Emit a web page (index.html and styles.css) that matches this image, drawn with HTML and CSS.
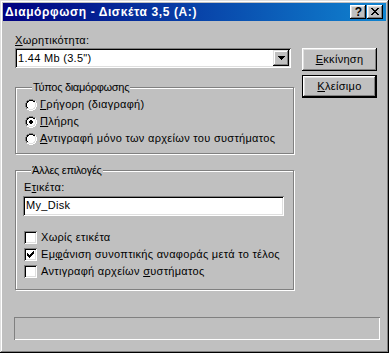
FILE: index.html
```html
<!DOCTYPE html>
<html lang="el">
<head>
<meta charset="utf-8">
<link rel="stylesheet" href="styles.css">
</head>
<body>
<div class="window">
  <div class="titlebar">
    <span class="title">Διαμόρφωση - Δισκέτα 3,5 (A:)</span>
    <div class="cap-btns">
      <span class="cap-btn help">?</span>
      <span class="cap-btn close"><svg width="8" height="7" viewBox="0 0 8 7" shape-rendering="crispEdges"><path d="M0 0h2v1h-2zM6 0h2v1h-2zM1 1h2v1h-2zM5 1h2v1h-2zM2 2h4v1h-4zM3 3h2v1h-2zM2 4h4v1h-4zM1 5h2v1h-2zM5 5h2v1h-2zM0 6h2v1h-2zM6 6h2v1h-2z" fill="#000"/></svg></span>
    </div>
  </div>
  <div class="content">
    <div class="main">
      <div class="left">
        <div class="lbl"><u>Χ</u>ωρητικότητα:</div>
        <div class="combo">
          <span class="combo-text">1.44 Mb (3.5")</span>
          <span class="combo-btn"><svg width="7" height="4" viewBox="0 0 7 4" shape-rendering="crispEdges"><path d="M0 0h7v1h-7zM1 1h5v1h-5zM2 2h3v1h-3zM3 3h1v1h-1z" fill="#000"/></svg></span>
        </div>
        <fieldset class="group g1">
          <legend>Τύπος διαμόρφωσης</legend>
          <div class="opt">
            <svg class="radio" width="12" height="12" viewBox="0 0 12 12" shape-rendering="crispEdges"><path d="M4 0h4v1h-4zM2 1h2v1h-2zM8 1h2v1h-2zM1 2h1v2h-1zM0 4h1v4h-1zM1 8h1v2h-1z" fill="#808080"/><path d="M10 2h1v2h-1zM11 4h1v4h-1zM10 8h1v2h-1zM2 10h2v1h-2zM8 10h2v1h-2zM4 11h4v1h-4z" fill="#fff"/><path d="M4 1h4v1h-4zM2 2h2v1h-2zM8 2h2v1h-2zM2 3h1v1h-1zM1 4h1v4h-1zM2 8h1v1h-1z" fill="#000"/><path d="M9 3h1v1h-1zM10 4h1v4h-1zM9 8h1v1h-1zM2 9h2v1h-2zM8 9h2v1h-2zM4 10h4v1h-4z" fill="#dfdfdf"/><path d="M4 2h4v1h-4zM3 3h6v1h-6zM2 4h8v4h-8zM3 8h6v1h-6zM4 9h4v1h-4z" fill="#fff"/></svg>
            <span><u>Γ</u>ρήγορη (διαγραφή)</span>
          </div>
          <div class="opt">
            <svg class="radio" width="12" height="12" viewBox="0 0 12 12" shape-rendering="crispEdges"><path d="M4 0h4v1h-4zM2 1h2v1h-2zM8 1h2v1h-2zM1 2h1v2h-1zM0 4h1v4h-1zM1 8h1v2h-1z" fill="#808080"/><path d="M10 2h1v2h-1zM11 4h1v4h-1zM10 8h1v2h-1zM2 10h2v1h-2zM8 10h2v1h-2zM4 11h4v1h-4z" fill="#fff"/><path d="M4 1h4v1h-4zM2 2h2v1h-2zM8 2h2v1h-2zM2 3h1v1h-1zM1 4h1v4h-1zM2 8h1v1h-1z" fill="#000"/><path d="M9 3h1v1h-1zM10 4h1v4h-1zM9 8h1v1h-1zM2 9h2v1h-2zM8 9h2v1h-2zM4 10h4v1h-4z" fill="#dfdfdf"/><path d="M4 2h4v1h-4zM3 3h6v1h-6zM2 4h8v4h-8zM3 8h6v1h-6zM4 9h4v1h-4z" fill="#fff"/><path d="M5 4h2v1h-2zM4 5h4v2h-4zM5 7h2v1h-2z" fill="#000"/></svg>
            <span><u>Π</u>λήρης</span>
          </div>
          <div class="opt">
            <svg class="radio" width="12" height="12" viewBox="0 0 12 12" shape-rendering="crispEdges"><path d="M4 0h4v1h-4zM2 1h2v1h-2zM8 1h2v1h-2zM1 2h1v2h-1zM0 4h1v4h-1zM1 8h1v2h-1z" fill="#808080"/><path d="M10 2h1v2h-1zM11 4h1v4h-1zM10 8h1v2h-1zM2 10h2v1h-2zM8 10h2v1h-2zM4 11h4v1h-4z" fill="#fff"/><path d="M4 1h4v1h-4zM2 2h2v1h-2zM8 2h2v1h-2zM2 3h1v1h-1zM1 4h1v4h-1zM2 8h1v1h-1z" fill="#000"/><path d="M9 3h1v1h-1zM10 4h1v4h-1zM9 8h1v1h-1zM2 9h2v1h-2zM8 9h2v1h-2zM4 10h4v1h-4z" fill="#dfdfdf"/><path d="M4 2h4v1h-4zM3 3h6v1h-6zM2 4h8v4h-8zM3 8h6v1h-6zM4 9h4v1h-4z" fill="#fff"/></svg>
            <span><u>Α</u>ντιγραφή μόνο των αρχείων του συστήματος</span>
          </div>
        </fieldset>
        <fieldset class="group g2">
          <legend>Άλλες επιλογές</legend>
          <div class="lbl sub">Ε<u>τ</u>ικέτα:</div>
          <div class="textbox">My_Disk</div>
          <div class="checks">
            <div class="chk-row"><span class="chk"></span><span>Χωρίς ετικέτα</span></div>
            <div class="chk-row"><span class="chk"><svg width="7" height="7" viewBox="0 0 7 7" shape-rendering="crispEdges"><path d="M6 0h1v1h-1zM5 1h2v1h-2zM0 2h1v1h-1zM4 2h3v1h-3zM0 3h2v1h-2zM3 3h3v1h-3zM0 4h5v1h-5zM1 5h3v1h-3zM2 6h1v1h-1z" fill="#000"/></svg></span><span>Εμ<u>φ</u>άνιση συνοπτικής αναφοράς μετά το τέλος</span></div>
            <div class="chk-row"><span class="chk"></span><span>Αντιγραφή αρχείων <u>σ</u>υστήματος</span></div>
          </div>
        </fieldset>
      </div>
      <div class="right">
        <button class="btn"><u>Ε</u>κκίνηση</button>
        <button class="btn default"><u>Κ</u>λείσιμο</button>
      </div>
    </div>
    <div class="status"></div>
  </div>
</div>
</body>
</html>
```
FILE: styles.css
```css
* { box-sizing: border-box; }
html, body { margin: 0; padding: 0; background: #c0c0c0; }
body { font: 11px/13px "Liberation Sans", Arial, sans-serif; color: #000; letter-spacing: 0.3px; }
u { text-decoration: underline; text-underline-offset: 1px; }

.window {
  width: 389px; height: 353px; padding: 3px;
  background: #c0c0c0;
  display: flex; flex-direction: column;
  box-shadow: inset -1px -1px #000, inset 1px 1px #dfdfdf, inset -2px -2px #808080, inset 2px 2px #fff;
}
.titlebar {
  height: 18px; flex: none;
  background: linear-gradient(to right, #000080, #1084d0);
  display: flex; align-items: center; justify-content: space-between;
  padding: 0 3px 0 2px;
}
.title { color: #fff; font-weight: bold; font-size: 12px; line-height: 18px; letter-spacing: 0.6px; white-space: nowrap; }
.cap-btns { display: flex; gap: 1px; }
.cap-btn {
  width: 16px; height: 14px; background: #c0c0c0;
  display: flex; align-items: center; justify-content: center;
  letter-spacing: 0;
  box-shadow: inset -1px -1px #000, inset 1px 1px #fff, inset -2px -2px #808080, inset 2px 2px #dfdfdf;
}
.cap-btn.help { font-weight: bold; font-size: 12px; line-height: 14px; padding-left: 1px; }
.cap-btn.close svg { display: block; margin-top: -1px; }

.content { flex: 1; display: flex; flex-direction: column; padding-left: 12px; }
.main { display: flex; }
.left { width: 279px; padding-top: 13px; display: flex; flex-direction: column; }
.right { margin-left: 8px; padding-top: 27px; display: flex; flex-direction: column; gap: 4px; }

.lbl { height: 13px; white-space: nowrap; }
.combo {
  margin-top: 1px; width: 276px; height: 20px; padding: 2px;
  background: #fff; display: flex; align-items: center; justify-content: space-between;
  box-shadow: inset 1px 1px #808080, inset -1px -1px #fff, inset 2px 2px #000, inset -2px -2px #dfdfdf;
}
.combo-text { padding-left: 1px; }
.combo-btn {
  width: 16px; height: 16px; background: #c0c0c0;
  display: flex; align-items: center; justify-content: center;
  box-shadow: inset -1px -1px #000, inset 1px 1px #dfdfdf, inset -2px -2px #808080, inset 2px 2px #fff;
}
.combo-btn svg { display: block; }

.group {
  margin: 0; min-width: 0;
  border: 1px solid #808080;
  box-shadow: inset 1px 1px #fff, 1px 1px #fff;
}
.group legend {
  margin-left: 7px; padding: 0 1px; line-height: 13px; background: #c0c0c0; letter-spacing: -0.3px;
}
.g1 { margin-top: 13px; padding: 2px 0 6px 9px; }
.g2 { margin-top: 10px; padding: 4px 0 9px 8px; }

.opt { height: 17px; display: flex; align-items: center; gap: 3px; white-space: nowrap; }
.radio { display: block; flex: none; }

.textbox {
  margin-top: 2px; margin-left: -1px; width: 261px; height: 20px; padding: 3px;
  background: #fff; white-space: nowrap;
  box-shadow: inset 1px 1px #808080, inset -1px -1px #fff, inset 2px 2px #000, inset -2px -2px #dfdfdf;
}
.checks { margin-top: 13px; display: flex; flex-direction: column; }
.chk-row { height: 17px; display: flex; align-items: center; gap: 4px; white-space: nowrap; }
.chk {
  width: 13px; height: 13px; flex: none; background: #fff;
  display: flex; align-items: center; justify-content: center;
  box-shadow: inset 1px 1px #808080, inset -1px -1px #fff, inset 2px 2px #000, inset -2px -2px #dfdfdf;
}
.chk svg { display: block; }

.btn {
  width: 75px; height: 23px; padding: 0; margin: 0;
  font: 11px/13px "Liberation Sans", Arial, sans-serif; letter-spacing: 0.3px; color: #000;
  background: #c0c0c0; border: 0;
  box-shadow: inset -1px -1px #000, inset 1px 1px #fff, inset -2px -2px #808080, inset 2px 2px #dfdfdf;
}
.btn.default {
  box-shadow: inset 0 0 0 1px #000, inset -2px -2px #000, inset 2px 2px #fff, inset -3px -3px #808080, inset 3px 3px #dfdfdf;
}

.status {
  margin-top: 27px; margin-left: -1px; width: 366px; height: 23px;
  box-shadow: inset 1px 1px #808080, inset -1px -1px #fff;
}
```
